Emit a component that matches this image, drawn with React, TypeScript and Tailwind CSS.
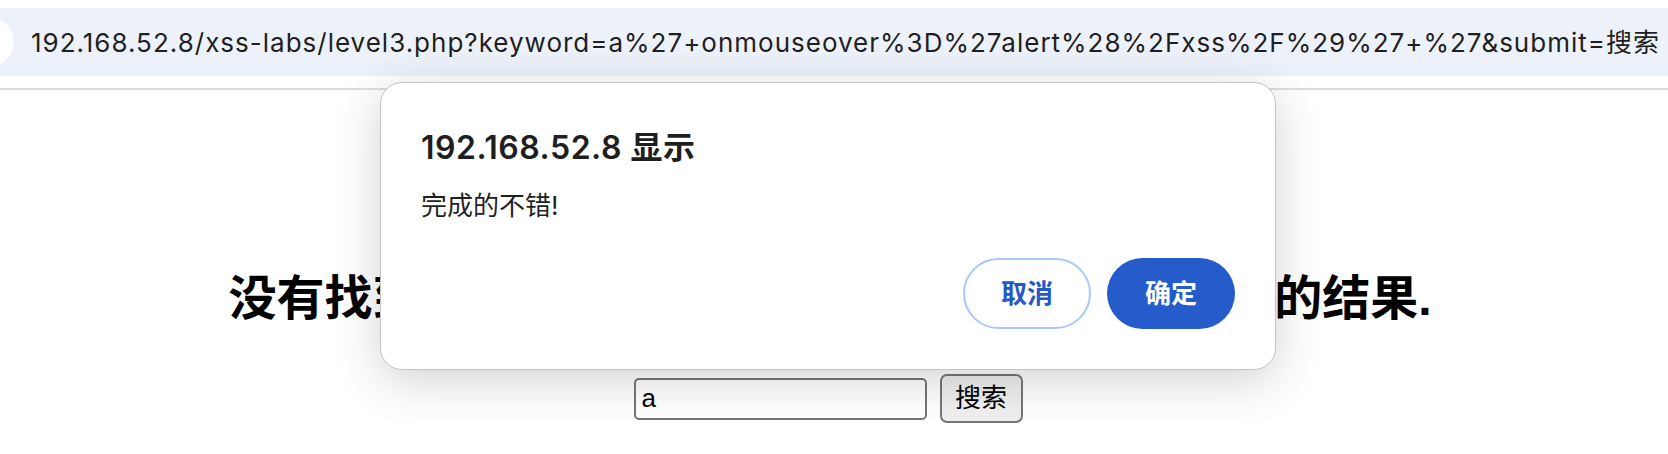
const URL_TEXT =
  "192.168.52.8/xss-labs/level3.php?keyword=a%27+onmouseover%3D%27alert%28%2Fxss%2F%29%27+%27&submit=搜索";

const KEYWORD = "a' onmouseover='alert(/xss/)' '";

function Toolbar() {
  return (
    <div className="pt-2">
      <div className="flex h-[68px] items-center overflow-hidden bg-[#edf2fa]">
        <div className="-ml-[38px] h-[48px] w-[52px] shrink-0 rounded-full bg-white" />
        <span className="ml-[17px] whitespace-nowrap text-[26px] tracking-[1px] text-[#1f1f1f]">{URL_TEXT}</span>
      </div>
      <div className="h-3" />
      <div className="h-[2px] bg-[#dcdcdc]" />
    </div>
  );
}

function Page() {
  return (
    <div className="flex flex-col items-center pr-[12px] font-['Liberation_Sans','Noto_Sans_CJK_SC',sans-serif] text-black">
      <h1 className="mt-[22px] h-[80px] text-[64px] font-bold leading-[80px]">欢迎来到level3</h1>
      <h2 className="mt-[83px] ml-[4px] whitespace-nowrap text-[48px] font-bold leading-[48px]">
        没有找到和<span className="tracking-[0.9px]">{KEYWORD}</span>相关的结果.
      </h2>
      <form className="mt-[51px] flex items-center gap-[13px]">
        <input
          readOnly
          value="a"
          className="h-[42px] w-[293px] rounded-[5px] border-2 border-[#767676] bg-white px-[6px] text-[26px] text-black outline-none"
        />
        <button
          type="button"
          className="h-[49px] w-[83px] rounded-[7px] border-2 border-[#767676] bg-[#efefef] text-[26px] text-black"
        >
          搜索
        </button>
      </form>
    </div>
  );
}

function AlertDialog() {
  return (
    <div className="absolute left-[380px] top-[82px] h-[288px] w-[896px] rounded-[22px] border border-[#c4c4c4] bg-white px-[40px] pt-[45px] shadow-[0_10px_48px_rgba(0,0,0,0.18)]">
      <div className="text-[32px] font-semibold leading-[40px] tracking-[0.5px] text-[#1f1f1f]">192.168.52.8 显示</div>
      <div className="mt-[20px] text-[26px] leading-[36px] text-[#1f1f1f]">完成的不错!</div>
      <div className="mt-[34px] flex justify-end gap-4">
        <button className="h-[71px] w-[128px] rounded-full border-2 border-[#a8c7fa] bg-white text-[26px] font-bold text-[#2458c9]">
          取消
        </button>
        <button className="h-[71px] w-[128px] rounded-full bg-[#255bcb] text-[26px] font-bold text-white">
          确定
        </button>
      </div>
    </div>
  );
}

export default function App() {
  return (
    <div className="relative h-[454px] w-[1668px] overflow-hidden bg-white font-['Inter','Noto_Sans_CJK_SC',sans-serif]">
      <Toolbar />
      <Page />
      <AlertDialog />
    </div>
  );
}
